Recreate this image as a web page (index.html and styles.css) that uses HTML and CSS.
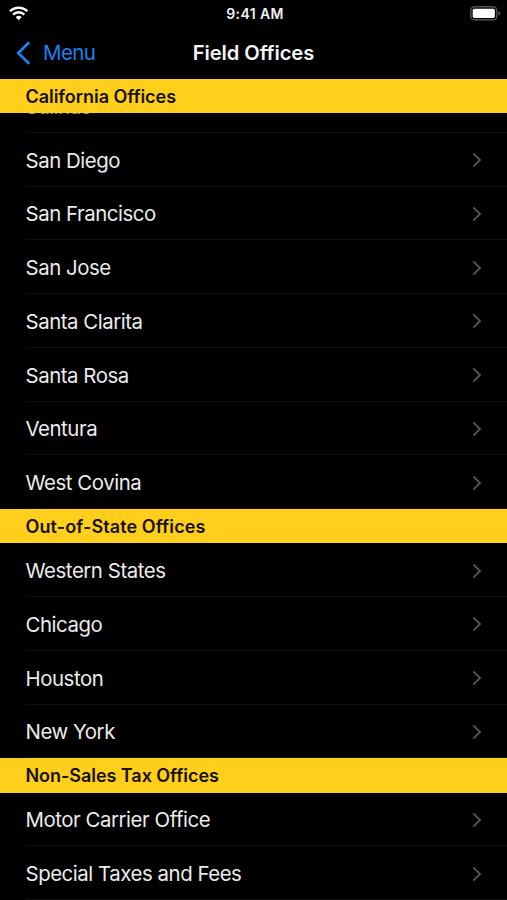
FILE: index.html
```
<!DOCTYPE html>
<html lang="en">
<head>
	<meta charset="UTF-8">
	<meta name="viewport" content="width=device-width, initial-scale=1" />
	<title>Field Offices</title>
	<link rel="stylesheet" href="styles.css">
</head>
<body>

<svg class="defs" width="0" height="0">
	<symbol id="chevron" viewBox="0 0 10 16">
		<path d="M1.3 1.4 8 8 1.3 14.6" fill="none" stroke="currentColor" stroke-width="1.9"/>
	</symbol>
</svg>

<div class="status">
	<svg class="wifi" width="20" height="15" viewBox="0 0 20 15">
		<g fill="none" stroke="#fff" stroke-width="2.5">
			<path d="M1 5.2a12.6 12.6 0 0 1 17.4 0"/>
			<path d="M4.1 8.6a8 8 0 0 1 11.2 0"/>
		</g>
		<path d="M9.7 14.3 6.7 11.3a4.3 4.3 0 0 1 6 0z" fill="#fff"/>
	</svg>
	<span class="time">9:41 AM</span>
	<svg class="battery" width="31" height="15" viewBox="0 0 31 15">
		<rect x=".8" y=".8" width="26" height="13" rx="3.6" fill="none" stroke="#545456" stroke-width="1.4"/>
		<rect x="2.7" y="2.7" width="22.2" height="9.2" rx="1.6" fill="#fff"/>
		<path d="M28.3 5v4.8q2-.9 2-2.4t-2-2.4z" fill="#545456"/>
	</svg>
</div>

<div class="nav">
	<a class="back">
		<svg width="15" height="24" viewBox="0 0 15 24"><path d="M13.2 1.2 2.2 12l11 10.8" fill="none" stroke="currentColor" stroke-width="2.7"/></svg>
		<span>Menu</span>
	</a>
	<h1>Field Offices</h1>
</div>

<div class="list">
	<h2>California Offices</h2>
	<!-- scrolled up behind the section header -->
	<div class="row under"><span>Salinas</span></div>
	<div class="row"><span>San Diego</span><svg><use href="#chevron"/></svg></div>
	<div class="row"><span>San Francisco</span><svg><use href="#chevron"/></svg></div>
	<div class="row"><span>San Jose</span><svg><use href="#chevron"/></svg></div>
	<div class="row"><span>Santa Clarita</span><svg><use href="#chevron"/></svg></div>
	<div class="row"><span>Santa Rosa</span><svg><use href="#chevron"/></svg></div>
	<div class="row"><span>Ventura</span><svg><use href="#chevron"/></svg></div>
	<div class="row"><span>West Covina</span><svg><use href="#chevron"/></svg></div>

	<h2 class="wide">Out-of-State Offices</h2>
	<div class="row"><span>Western States</span><svg><use href="#chevron"/></svg></div>
	<div class="row"><span>Chicago</span><svg><use href="#chevron"/></svg></div>
	<div class="row"><span>Houston</span><svg><use href="#chevron"/></svg></div>
	<div class="row"><span>New York</span><svg><use href="#chevron"/></svg></div>

	<h2>Non-Sales Tax Offices</h2>
	<div class="row"><span>Motor Carrier Office</span><svg><use href="#chevron"/></svg></div>
	<div class="row"><span>Special Taxes and Fees</span><svg><use href="#chevron"/></svg></div>
</div>

</body>
</html>
```
FILE: styles.css
```
* {
	box-sizing: border-box;
}
body {
	margin: 0;
	height: 900px;
	overflow: hidden;
	background: #000;
	color: #ebebeb;
	font-family: Inter, sans-serif;
}
h1, h2 {
	margin: 0;
	font-weight: 600;
}
.defs {
	display: block;
}
.status {
	display: grid;
	grid-template-columns: 1fr auto 1fr;
	align-items: center;
	height: 27px;
	padding: 0 6px 0 9px;
	color: #f0f0f0;
}
.time {
	font-size: 14px;
	font-weight: 600;
	line-height: 27px;
	letter-spacing: 0.4px;
}
.battery {
	justify-self: end;
}
.nav {
	display: grid;
	grid-template-columns: 1fr auto 1fr;
	align-items: center;
	height: 52px;
	padding: 0 16px;
}
.nav h1 {
	font-size: 20.2px;
	line-height: 50px;
	letter-spacing: -0.1px;
	color: #f4f4f4;
}
.back {
	display: flex;
	align-items: center;
	gap: 12px;
	color: #1c83ec;
	font-size: 20.5px;
	line-height: 50px;
	letter-spacing: -0.6px;
}
.back svg {
	margin-top: -1px;
}
.list h2 {
	position: relative;
	z-index: 1;
	height: 34.25px;
	padding: 1px 0 0 25.5px;
	background: #ffcf1b;
	color: #171204;
	font-size: 18px;
	line-height: 34px;
	letter-spacing: -0.05px;
}
.list h2.wide {
	letter-spacing: 0.1px;
}
.row {
	display: flex;
	align-items: center;
	justify-content: space-between;
	height: 53.75px;
	margin-left: 25.5px;
	padding: 2px 25px 0 0;
	border-bottom: 1px solid #111112;
	font-size: 20.4px;
	letter-spacing: -0.45px;
}
.row svg {
	width: 10px;
	height: 16px;
	color: #555558;
}
.row.under {
	margin-top: -34.25px;
	padding-top: 3px;
	color: #a09a86;
}
```
